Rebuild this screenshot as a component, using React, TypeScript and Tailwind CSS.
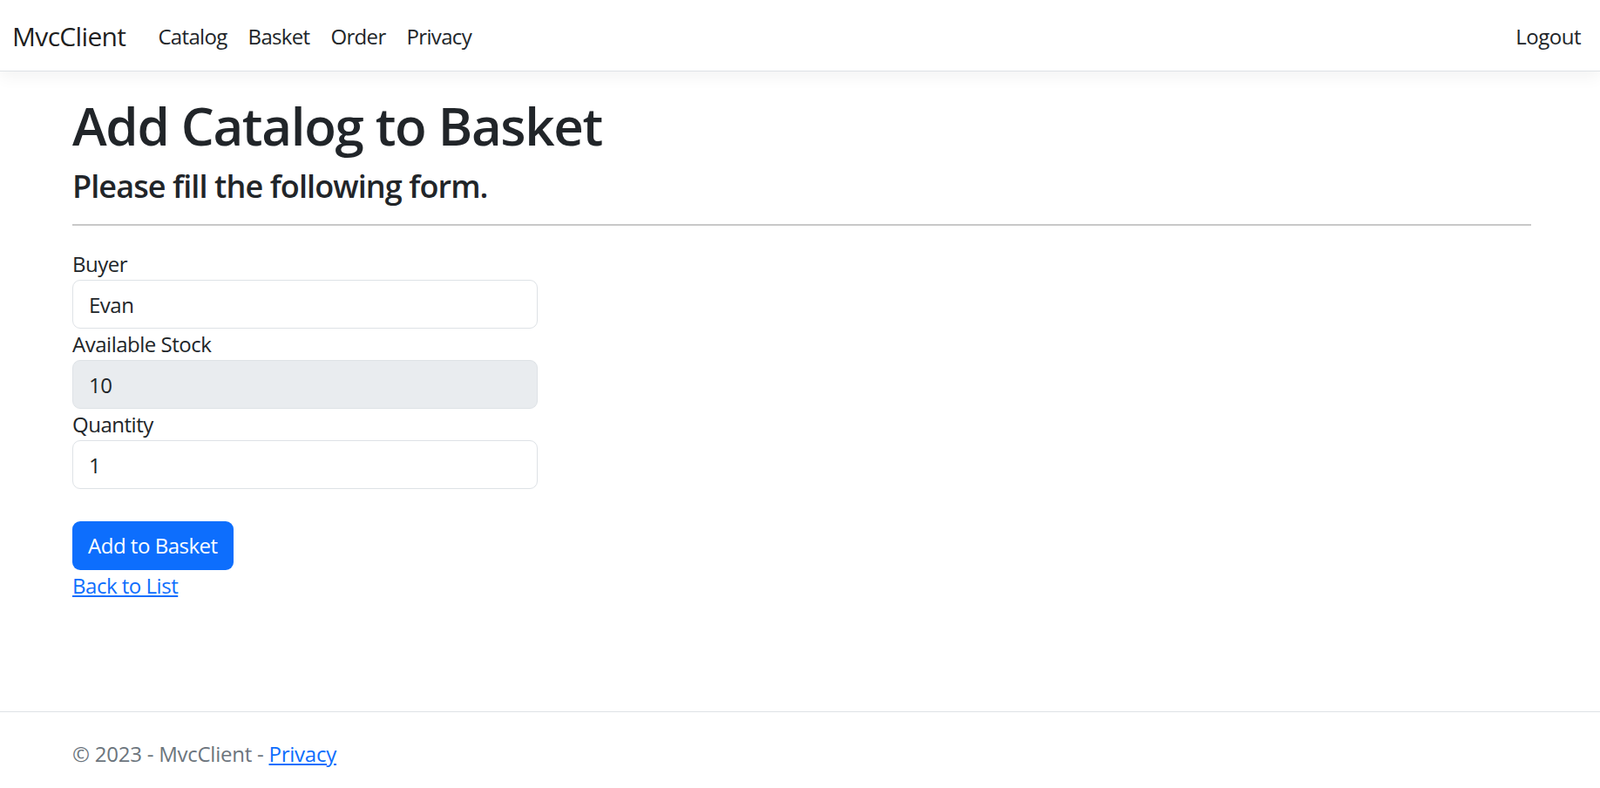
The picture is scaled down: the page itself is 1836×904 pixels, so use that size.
import { useState } from 'react';

const navLinks = ['Catalog', 'Basket', 'Order', 'Privacy'];

export default function App() {
  const [buyer, setBuyer] = useState('Evan');
  const [quantity, setQuantity] = useState('1');

  return (
    <div className="min-h-[904px] flex flex-col bg-white text-[#212529] font-['Open_Sans',sans-serif] text-[24px] leading-[36px] tracking-[-0.02em]">
      {/* navbar */}
      <header className="h-[82px] pt-[2px] flex items-center justify-between pl-[14px] pr-[22px] border-b-[1.5px] border-[#dee2e6] shadow-[0_6px_18px_rgba(0,0,0,0.05)] bg-white">
        <div className="flex items-center">
          <a href="#" className="text-[30px] leading-[45px] text-black/90 mr-[25px] tracking-[-0.022em]">MvcClient</a>
          <nav className="flex items-center">
            {navLinks.map((link) => (
              <a key={link} href="#" className="px-[12px] text-[#212529] tracking-[-0.028em]">
                {link}
              </a>
            ))}
          </nav>
        </div>
        <a href="#" className="text-[#212529]">Logout</a>
      </header>

      {/* main */}
      <main className="flex-1 w-[1710px] mx-auto pl-[20px] pr-[16px] pt-[26px]">
        <h1 className="text-[60px] leading-[72px] font-semibold mb-[12px] tracking-[-0.022em]">Add Catalog to Basket</h1>
        <h4 className="text-[36px] leading-[43px] font-semibold tracking-[-0.025em]">Please fill the following form.</h4>
        <hr className="mt-[22px] mb-[26px] border-t-[2px] border-[#c8c8c8]" />

        <form className="w-[534px]" onSubmit={(e) => e.preventDefault()}>
          <label className="block">Buyer</label>
          <input
            value={buyer}
            onChange={(e) => setBuyer(e.target.value)}
            className="block w-full h-[56px] px-[18px] border-[1.5px] border-[#dee2e6] rounded-[9px] outline-none"
          />
          <label className="block">Available Stock</label>
          <input
            value="10"
            readOnly
            className="block w-full h-[56px] px-[18px] border-[1.5px] border-[#dee2e6] rounded-[9px] bg-[#e9ecef] outline-none"
          />
          <label className="block">Quantity</label>
          <input
            value={quantity}
            onChange={(e) => setQuantity(e.target.value)}
            className="block w-full h-[56px] px-[18px] border-[1.5px] border-[#dee2e6] rounded-[9px] outline-none"
          />
          <button
            type="submit"
            className="mt-[37px] h-[56px] px-[18px] rounded-[9px] bg-[#0d6efd] text-white"
          >
            Add to Basket
          </button>
        </form>
        <a href="#" className="inline-block text-[#0d6efd] underline">Back to List</a>
      </main>

      {/* footer */}
      <footer className="border-t-[1.5px] border-[#dee2e6] h-[88px]">
        <div className="w-[1710px] mx-auto px-[20px] pt-[3px] leading-[90px] text-[#6c757d] tracking-[-0.01em]">
          © 2023 - MvcClient - <a href="#" className="text-[#0d6efd] underline">Privacy</a>
        </div>
      </footer>
    </div>
  );
}
